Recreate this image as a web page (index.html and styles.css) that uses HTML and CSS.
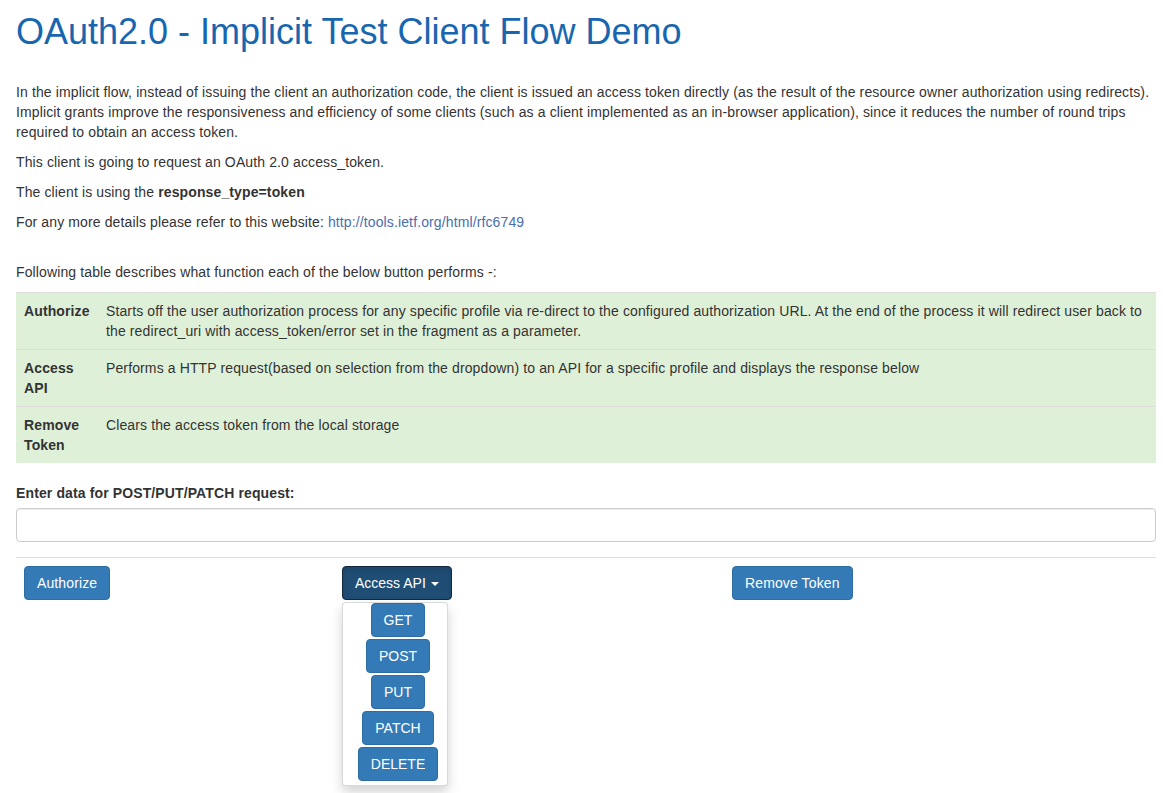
FILE: index.html
```html
<!DOCTYPE html>
<html lang="en">
<head>
<meta charset="utf-8">
<title>OAuth2.0 - Implicit Test Client Flow Demo</title>
<link rel="stylesheet" href="styles.css">
</head>
<body>
<div class="container">
  <h1 class="title">OAuth2.0 - Implicit Test Client Flow Demo</h1>
  <p class="intro">In the implicit flow, instead of issuing the client an authorization code, the client is issued an access token directly (as the result of the resource owner authorization using redirects). Implicit grants improve the responsiveness and efficiency of some clients (such as a client implemented as an in-browser application), since it reduces the number of round trips required to obtain an access token.</p>
  <p>This client is going to request an OAuth 2.0 access_token.</p>
  <p>The client is using the <b>response_type=token</b></p>
  <p class="more">For any more details please refer to this website: <a href="#" class="link">http://tools.ietf.org/html/rfc6749</a></p>
  <p>Following table describes what function each of the below button performs -:</p>
  <table class="func-table">
    <tr>
      <th>Authorize</th>
      <td>Starts off the user authorization process for any specific profile via re-direct to the configured authorization URL. At the end of the process it will redirect user back to the redirect_uri with access_token/error set in the fragment as a parameter.</td>
    </tr>
    <tr>
      <th>Access API</th>
      <td>Performs a HTTP request(based on selection from the dropdown) to an API for a specific profile and displays the response below</td>
    </tr>
    <tr>
      <th>Remove Token</th>
      <td>Clears the access token from the local storage</td>
    </tr>
  </table>
  <div class="form-group">
    <label class="label" for="data">Enter data for POST/PUT/PATCH request:</label>
    <input class="form-control" id="data" type="text">
  </div>
  <hr class="divider">
  <div class="actions">
    <div class="col col-auth"><button class="btn">Authorize</button></div>
    <div class="col col-api">
      <div class="dropdown">
        <button class="btn btn-active">Access API <span class="caret"></span></button>
        <div class="menu">
          <button class="btn btn-item">GET</button>
          <button class="btn btn-item">POST</button>
          <button class="btn btn-item">PUT</button>
          <button class="btn btn-item">PATCH</button>
          <button class="btn btn-item">DELETE</button>
        </div>
      </div>
    </div>
    <div class="col col-remove"><button class="btn">Remove Token</button></div>
  </div>
</div>
</body>
</html>
```

FILE: styles.css
```css
html, body {
  margin: 0;
  padding: 0;
}
body {
  font-family: "Liberation Sans", Arial, Helvetica, sans-serif;
  font-size: 14px;
  line-height: 20px;
  letter-spacing: 0.12px;
  color: #333;
  background: #fff;
  min-height: 793px;
}
.container {
  padding: 0 7px 200px 16px;
}
.title {
  font-size: 36px;
  font-weight: 400;
  line-height: 40px;
  letter-spacing: 0;
  color: #1766b0;
  margin: 12px 0 30px;
}
p {
  margin: 0 0 10px;
}
.more {
  margin-bottom: 30px;
}
.link {
  color: #4a6eae;
  text-decoration: none;
}
.func-table {
  width: 100%;
  table-layout: fixed;
  border-collapse: collapse;
  border-spacing: 0;
  margin-bottom: 20px;
  background: #dff0d8;
}
.func-table th,
.func-table td {
  padding: 8px;
  vertical-align: top;
  text-align: left;
  border-top: 1px solid #ddd;
  line-height: 20px;
}
.func-table th {
  width: 66px;
  font-weight: 700;
}
.form-group {
  margin-bottom: 15px;
}
.label {
  display: block;
  font-weight: 700;
  margin-bottom: 5px;
}
.form-control {
  display: block;
  box-sizing: border-box;
  width: 100%;
  height: 34px;
  padding: 6px 12px;
  font: inherit;
  border: 1px solid #ccc;
  border-radius: 4px;
  box-shadow: inset 0 1px 1px rgba(0,0,0,.075);
  margin: 0;
}
.divider {
  border: 0;
  border-top: 1px solid #ddd;
  margin: 0 0 8px;
}
.actions {
  display: grid;
  grid-template-columns: 318px 390px auto;
  padding-left: 8px;
  align-items: start;
}
.btn {
  display: inline-block;
  box-sizing: border-box;
  height: 34px;
  padding: 6px 12px;
  font-family: "Liberation Sans", Arial, Helvetica, sans-serif;
  font-size: 14px;
  line-height: 20px;
  letter-spacing: 0.12px;
  color: #fff;
  background: #337ab7;
  border: 1px solid #2e6da4;
  border-radius: 4px;
  white-space: nowrap;
  cursor: pointer;
}
.btn-item {
  letter-spacing: 0;
}
.btn-active {
  letter-spacing: 0;
  background: #204d74;
  border-color: #122b40;
  box-shadow: inset 0 3px 5px rgba(0,0,0,.125);
}
.caret {
  display: inline-block;
  width: 0;
  height: 0;
  margin-left: 1px;
  vertical-align: middle;
  border-top: 4px solid #fff;
  border-left: 4px solid transparent;
  border-right: 4px solid transparent;
}
.dropdown {
  position: relative;
  display: inline-block;
}
.menu {
  position: absolute;
  top: 36px;
  left: 0;
  width: 106px;
  box-sizing: border-box;
  padding: 0 0 4px 6px;
  background: #fff;
  border: 1px solid rgba(0,0,0,.15);
  border-radius: 4px;
  box-shadow: 0 6px 12px rgba(0,0,0,.175);
  display: flex;
  flex-direction: column;
  align-items: center;
  gap: 2px;
  z-index: 10;
}
```
